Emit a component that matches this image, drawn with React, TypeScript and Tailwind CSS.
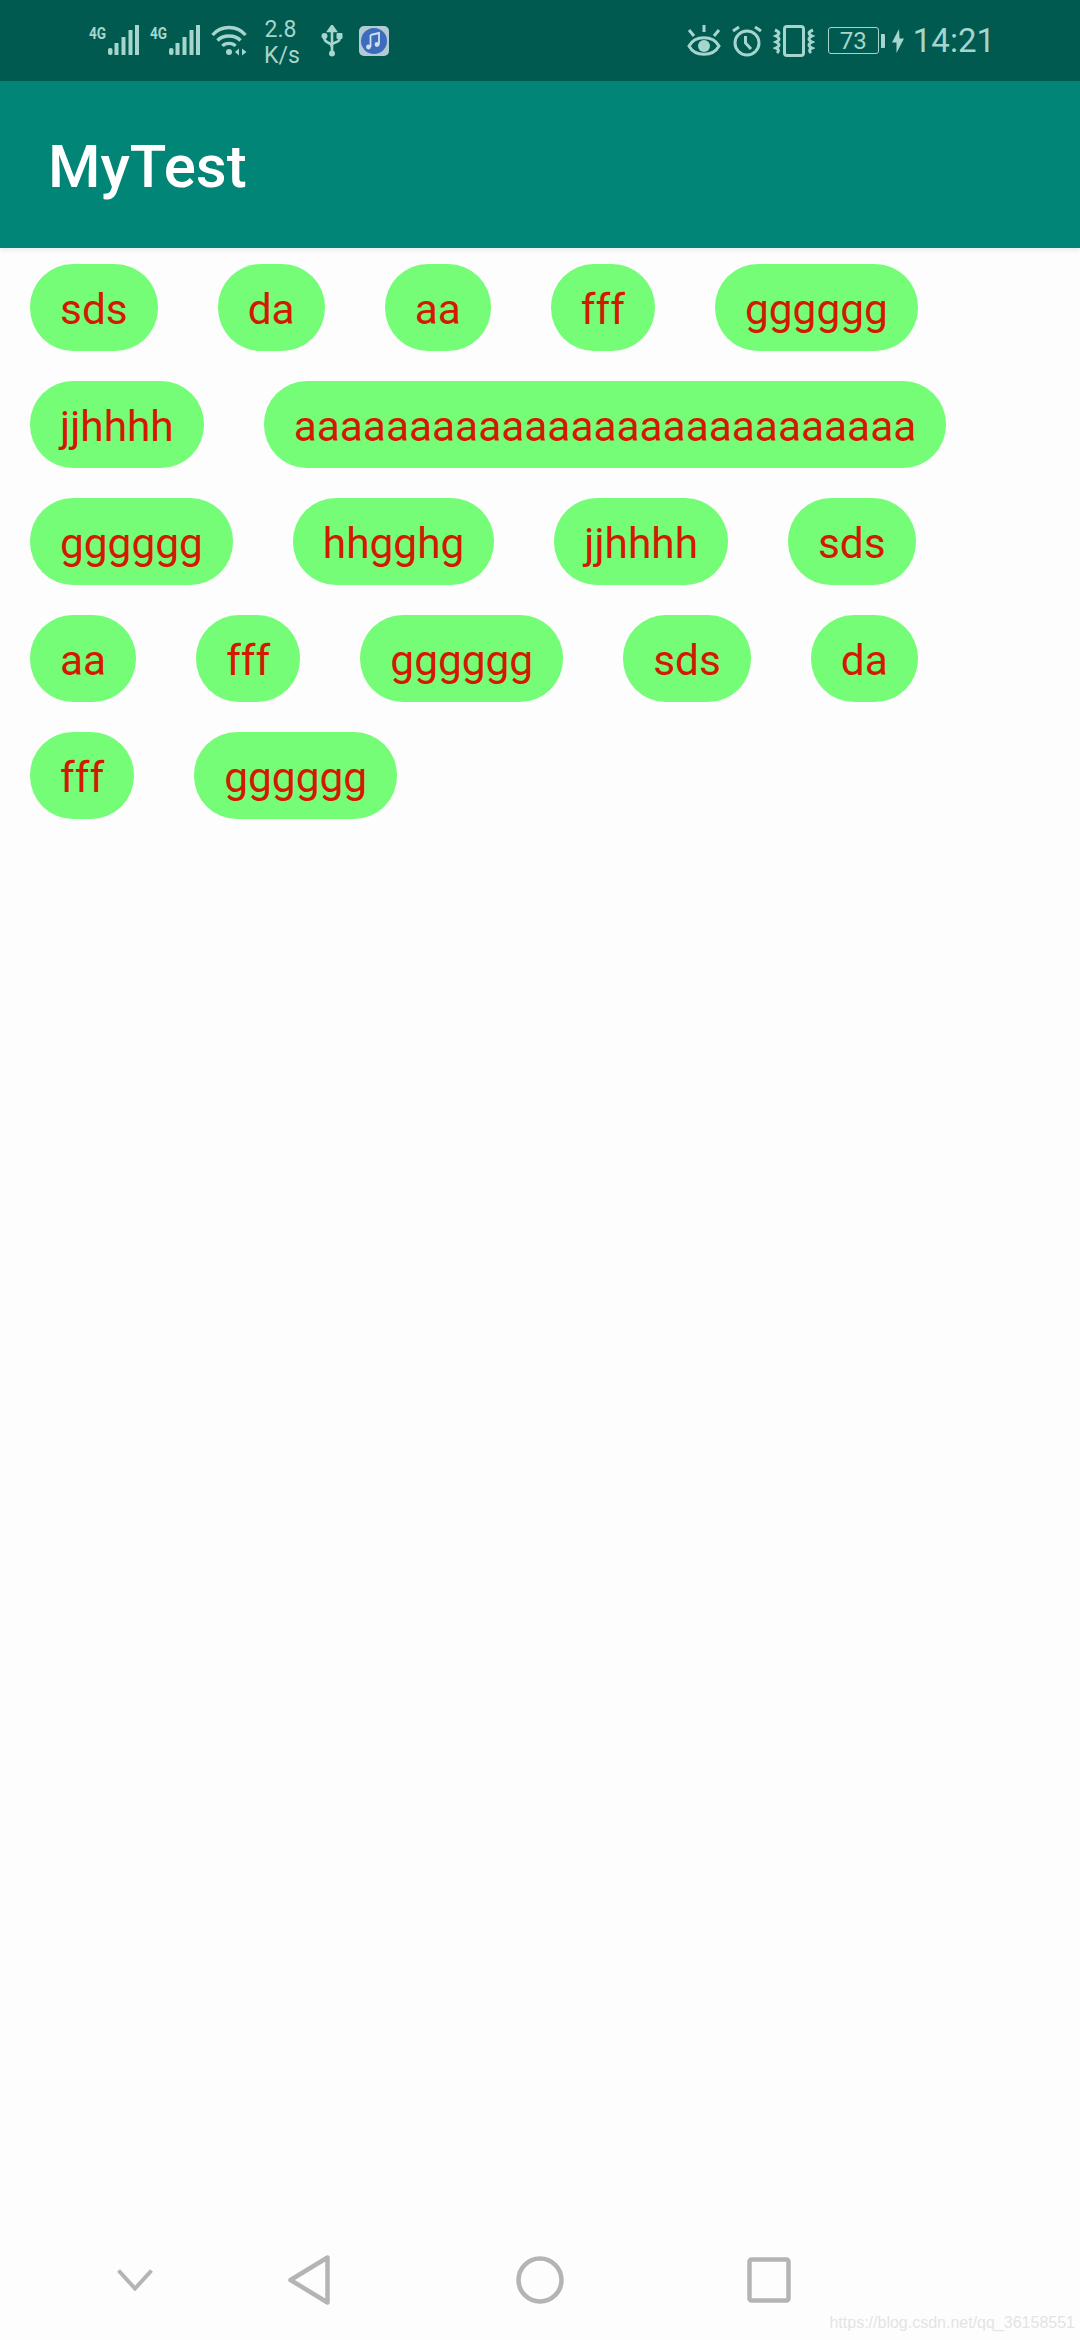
// App.tsx
// MyTest demo screen: a flow of green tags under an Android app bar.

const font = "font-['Roboto',sans-serif]";

const tags = [
  "sds",
  "da",
  "aa",
  "fff",
  "gggggg",
  "jjhhhh",
  "aaaaaaaaaaaaaaaaaaaaaaaaaaa",
  "gggggg",
  "hhgghg",
  "jjhhhh",
  "sds",
  "aa",
  "fff",
  "gggggg",
  "sds",
  "da",
  "fff",
  "gggggg",
];

// ── Status bar icons ───────────────────────────────────────────────────────

function Signal() {
  return (
    <div className="relative h-[32px] w-[50px]">
      <span className="absolute left-0 top-[-2px] origin-left scale-x-[0.8] font-['Roboto',sans-serif] text-[17px] font-bold leading-[20px] text-[#a5d5cd]">
        4G
      </span>
      <svg viewBox="0 0 50 32" className="absolute inset-0 h-full w-full" fill="#a5d5cd">
        <rect x="19" y="23" width="4.5" height="7" rx="2" />
        <rect x="25.5" y="18" width="4" height="12" />
        <rect x="32.5" y="12" width="4" height="18" />
        <rect x="39.5" y="5" width="4" height="25" />
        <rect x="46" y="0" width="4" height="30" />
      </svg>
    </div>
  );
}

function Wifi() {
  return (
    <svg viewBox="0 0 36 32" className="h-[32px] w-[36px]" fill="none" stroke="#a5d5cd" strokeWidth="3.4">
      <path d="M1.5 10 C 10 0, 26 0, 34.5 10" />
      <path d="M6.5 15.5 C 12 9.5, 24 9.5, 29.5 15.5" />
      <path d="M11.5 21 C 14.5 17.5, 21.5 17.5, 24.5 21" />
      <circle cx="18" cy="27" r="3" fill="#a5d5cd" stroke="none" />
      <path d="M28 23.5 L24 27 L28 30.5 Z" fill="#a5d5cd" stroke="none" />
      <path d="M31 23.5 L35.5 27 L31 30.5 Z" fill="#a5d5cd" stroke="none" />
    </svg>
  );
}

function Usb() {
  return (
    <svg viewBox="0 0 22 32" className="h-[32px] w-[22px]" fill="none" stroke="#a5d5cd" strokeWidth="2.6">
      <path d="M11 3 V28" />
      <path d="M7.5 6 L11 1 L14.5 6 Z" fill="#a5d5cd" />
      <circle cx="11" cy="28.5" r="3" fill="#a5d5cd" stroke="none" />
      <path d="M3.5 12 V14 C3.5 18 11 17 11 22" />
      <path d="M18.5 12 V14 C18.5 18 11 17 11 20" />
      <circle cx="3.5" cy="11" r="3" fill="#a5d5cd" stroke="none" />
      <rect x="15.5" y="8" width="6" height="6" rx="1" fill="#a5d5cd" stroke="none" />
    </svg>
  );
}

function MusicApp() {
  return (
    <svg viewBox="0 0 30 30" className="h-[30px] w-[30px]">
      <rect width="30" height="30" rx="5" fill="#b4cbd6" />
      <circle cx="15" cy="15" r="13" fill="#3c6cbc" />
      <path d="M11.5 9 L20 7 V18.5 M11.5 9 V21" fill="none" stroke="#cfe0f2" strokeWidth="1.8" />
      <circle cx="9.5" cy="21" r="2.4" fill="#cfe0f2" />
      <circle cx="18" cy="18.5" r="2.4" fill="#cfe0f2" />
    </svg>
  );
}

function Eye() {
  return (
    <svg viewBox="0 0 34 32" className="h-[32px] w-[34px]" fill="none" stroke="#a5d5cd" strokeWidth="3">
      <path d="M2 21 C 8 10, 26 10, 32 21 C 26 32, 8 32, 2 21 Z" />
      <circle cx="17" cy="21" r="6" fill="#a5d5cd" stroke="none" />
      <path d="M2 5 L7 11 M17 0 V7 M32 5 L27 11" />
    </svg>
  );
}

function Alarm() {
  return (
    <svg viewBox="0 0 32 32" className="h-[32px] w-[32px]" fill="none" stroke="#a5d5cd" strokeWidth="3">
      <circle cx="16" cy="18" r="12" />
      <path d="M14.5 11 V18 L20 24" />
      <path d="M2 6 L8 2 M30 6 L24 2" />
    </svg>
  );
}

function Vibrate() {
  return (
    <svg viewBox="0 0 42 32" className="h-[32px] w-[42px]" fill="none" stroke="#a5d5cd" strokeWidth="3">
      <rect x="11.5" y="1.5" width="19" height="29" rx="2.5" />
      <path d="M2 5 C7 7 7 9 3 11 C7 13 7 15 3 17 C7 19 7 21 3 23 C6 24 6 26 4 28" />
      <path d="M40 5 C35 7 35 9 39 11 C35 13 35 15 39 17 C35 19 35 21 39 23 C36 24 36 26 38 28" />
    </svg>
  );
}

function Battery() {
  return (
    <div className="flex items-center gap-[2px]">
      <div className="flex h-[27px] w-[51px] items-center justify-center rounded-[3px] border-[1.5px] border-[#a5d5cd] font-['Roboto',sans-serif] text-[24px] leading-none text-[#a5d5cd]">
        73
      </div>
      <div className="h-[14px] w-[4px] rounded-r-[1px] bg-[#a5d5cd]" />
    </div>
  );
}

function Bolt() {
  return (
    <svg viewBox="0 0 12 24" className="h-[24px] w-[12px]" fill="#a5d5cd">
      <path d="M7 0 L0 13.5 H4.5 L4.5 24 L12 9.5 H7.5 Z" />
    </svg>
  );
}

// ── Bottom navigation ──────────────────────────────────────────────────────

function NavBar() {
  return (
    <div className="relative flex h-[125px] shrink-0 items-center pl-[117px] pt-[4px]">
      <svg viewBox="0 0 36 22" className="h-[22px] w-[36px]" fill="none" stroke="#b4b4b4" strokeWidth="4">
        <path d="M1.5 1.5 L18 19.5 L34.5 1.5" />
      </svg>
      <svg viewBox="0 0 42 50" className="ml-[135px] h-[50px] w-[42px]" fill="none" stroke="#b4b4b4" strokeWidth="4.5" strokeLinejoin="round">
        <path d="M39.5 2.5 V47.5 L2.5 25 Z" />
      </svg>
      <svg viewBox="0 0 48 48" className="ml-[186px] h-[48px] w-[48px]" fill="none" stroke="#b4b4b4" strokeWidth="4.5">
        <circle cx="24" cy="24" r="21.5" />
      </svg>
      <svg viewBox="0 0 44 46" className="ml-[183px] h-[46px] w-[44px]" fill="none" stroke="#b4b4b4" strokeWidth="4.5" strokeLinejoin="round">
        <rect x="2.5" y="2.5" width="39" height="41" rx="2" />
      </svg>
      <span className="absolute bottom-[5px] right-[5px] font-['Liberation_Sans',sans-serif] text-[16px] text-[#e4e4e4]">
        https://blog.csdn.net/qq_36158551
      </span>
    </div>
  );
}

// ── Page ───────────────────────────────────────────────────────────────────

export default function App() {
  return (
    <div className={`flex h-[2340px] w-[1080px] flex-col overflow-hidden bg-[#fdfdfe] ${font}`}>
      {/* Status bar */}
      <div className="flex h-[81px] shrink-0 items-center bg-[#005a50] pl-[89px] pr-[85px] text-[#a5d5cd]">
        <Signal />
        <div className="ml-[11px]">
          <Signal />
        </div>
        <div className="ml-[11px]">
          <Wifi />
        </div>
        <div className="ml-[17px] w-[33px] pt-[5px] text-center text-[23px] leading-[26px]">
          <div>2.8</div>
          <div>K/s</div>
        </div>
        <div className="ml-[24px]">
          <Usb />
        </div>
        <div className="ml-[16px]">
          <MusicApp />
        </div>
        <div className="ml-auto flex items-center">
          <Eye />
          <div className="ml-[10px]">
            <Alarm />
          </div>
          <div className="ml-[10px]">
            <Vibrate />
          </div>
          <div className="ml-[13px]">
            <Battery />
          </div>
          <div className="ml-[7px]">
            <Bolt />
          </div>
          <span className="ml-[9px] text-[33px] leading-none">14:21</span>
        </div>
      </div>

      {/* App bar */}
      <div className="flex h-[167px] shrink-0 items-center bg-[#008577] pl-[48px] pt-[5px] shadow-[0_3px_4px_rgba(0,0,0,0.06)]">
        <h1 className="text-[60px] font-medium leading-none text-white">MyTest</h1>
      </div>

      {/* Tags */}
      <div className="flex flex-1 flex-wrap content-start gap-x-[60px] gap-y-[30px] px-[30px] pt-[16px]">
        {tags.map((tag, i) => (
          <div
            key={i}
            className="flex h-[87px] items-center rounded-[43px] bg-[#76fd78] px-[30px] pt-[5px] text-[42.4px] leading-none text-[#d11a00]"
          >
            {tag}
          </div>
        ))}
      </div>

      <NavBar />
    </div>
  );
}
